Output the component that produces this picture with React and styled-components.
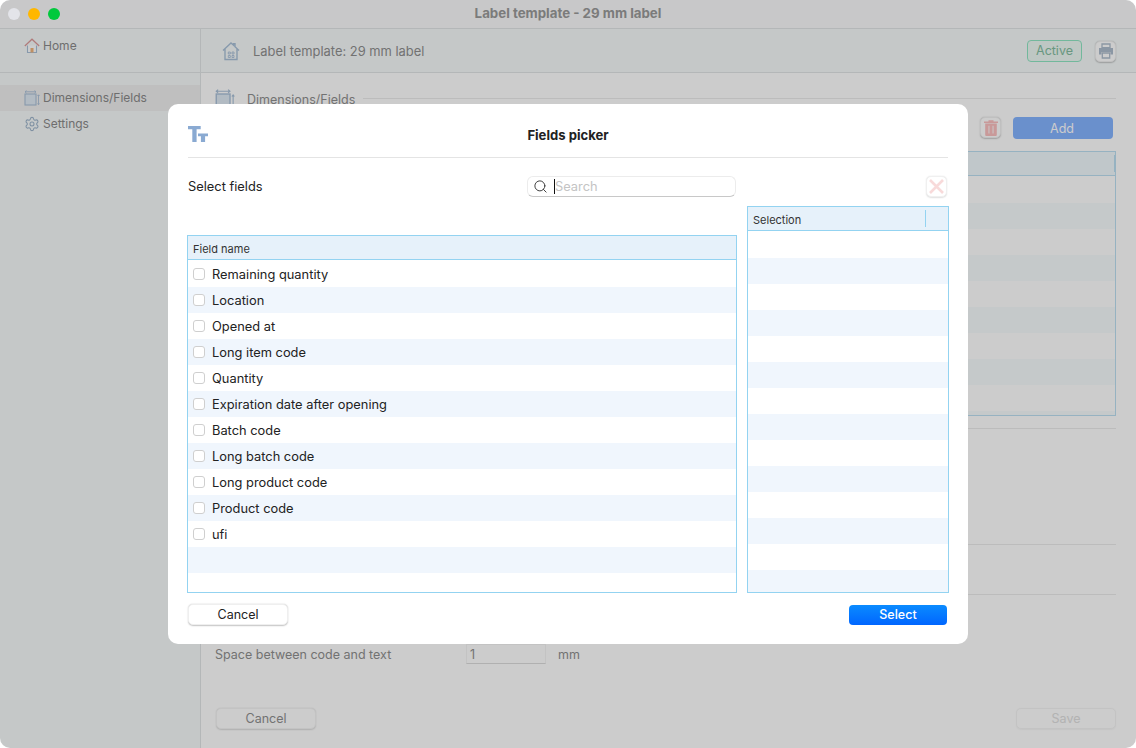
import React from "react";
import styled, { createGlobalStyle } from "styled-components";
import { Search, Settings } from "lucide-react";

const GlobalStyle = createGlobalStyle`
  html, body { margin: 0; padding: 0; background: #fff; }
  body { font-family: Inter, "Liberation Sans", sans-serif; -webkit-font-smoothing: antialiased; }
  * { box-sizing: border-box; }
`;

const FIELDS = [
  "Remaining quantity",
  "Location",
  "Opened at",
  "Long item code",
  "Quantity",
  "Expiration date after opening",
  "Batch code",
  "Long batch code",
  "Long product code",
  "Product code",
  "ufi",
  "",
  "",
];

const Window = styled.div`
  position: relative;
  width: 1136px;
  height: 748px;
  border-radius: 10px;
  overflow: hidden;
  background: #fff;
  display: flex;
  flex-direction: column;
`;

const TitleBar = styled.div`
  height: 29px;
  flex: none;
  background: #fafbfc;
  border-bottom: 1px solid #e2e5e6;
  display: flex;
  align-items: center;
  justify-content: center;
  position: relative;
  font-size: 13.3px;
  font-weight: 700;
  color: #9a9a9a;
  padding-bottom: 2px;
`;

const Lights = styled.div`
  position: absolute;
  z-index: 2;
  left: 8px;
  top: 8px;
  display: flex;
  gap: 8px;
`;

const Light = styled.span`
  width: 12px;
  height: 12px;
  border-radius: 50%;
  background: ${(p) => p.$color};
`;

const Body = styled.div`
  flex: 1;
  display: flex;
  min-height: 0;
`;

const Sidebar = styled.aside`
  width: 201px;
  flex: none;
  background: #f7fbfb;
  border-right: 1px solid #e2e5e6;
  color: #8a8a8a;
  font-size: 12px;
`;

const SideTop = styled.div`
  height: 44px;
  border-bottom: 1px solid #e2e5e6;
  margin-bottom: 12px;
  padding-top: 4px;
`;

const NavRow = styled.div`
  height: 26px;
  padding-left: 24px;
  display: flex;
  align-items: center;
  gap: 3px;
  padding-bottom: 1px;
  background: ${(p) => (p.$active ? "#efefef" : "transparent")};
  svg { flex: none; }
`;

const Main = styled.main`
  flex: 1;
  min-width: 0;
  display: flex;
  flex-direction: column;
  background: #fff;
  color: #8f8f8f;
  font-size: 12.5px;
`;

const MainHeader = styled.header`
  height: 44px;
  flex: none;
  background: #f7fbfb;
  border-bottom: 1px solid #e2e5e6;
  display: flex;
  align-items: center;
  padding: 1px 20px 0 21px;
  gap: 13px;
`;

const HeaderTitle = styled.span`
  flex: 1;
  font-size: 12.9px;
`;

const ActiveBadge = styled.span`
  width: 55px;
  height: 22px;
  display: flex;
  align-items: center;
  justify-content: center;
  padding-bottom: 1px;
  border: 1px solid #8fe6c4;
  border-radius: 4px;
  background: #eef9f4;
  color: #82bda0;
`;

const IconButton = styled.button`
  width: 21px;
  height: 21px;
  padding: 0;
  display: flex;
  align-items: center;
  justify-content: center;
  background: ${(p) => p.$bg || "#fff"};
  border: 1px solid #f0f0f0;
  border-radius: 5px;
  box-shadow: 0 0.5px 1.5px rgba(0, 0, 0, ${(p) => p.$shadow || 0.22});
`;

const Content = styled.div`
  flex: 1;
  padding: 0 20px 0 14px;
  display: flex;
  flex-direction: column;
`;

const SectionHead = styled.div`
  height: 38px;
  flex: none;
  display: flex;
  align-items: center;
  gap: 12px;
  padding-top: 14px;
`;

const SectionLine = styled.span`
  flex: 1;
  height: 1px;
  background: #ececec;
  margin: -2px 0 0 -4px;
`;

const Toolbar = styled.div`
  height: 40px;
  flex: none;
  padding: 6px 3px 0 0;
  display: flex;
  justify-content: flex-end;
  gap: 12px;
`;

const AddButton = styled.button`
  width: 100px;
  height: 22px;
  border: 0;
  border-radius: 4px;
  background: #85b4ff;
  color: #fff;
  font: inherit;
  padding: 0 2px 0 0;
`;

const BackTable = styled.div`
  height: 265px;
  flex: none;
  border: 1px solid #bcdff2;
  overflow: hidden;
`;

const BackHeader = styled.div`
  height: 24px;
  background: #f0f9fd;
  border-bottom: 1px solid #bcdff2;
  display: flex;
  align-items: center;
  justify-content: flex-end;
`;

const BackSplit = styled.span`
  width: 1px;
  height: 17px;
  background: #bcdff2;
`;

const BackRow = styled.div`
  height: 26px;
  background: ${(p) => (p.$alt ? "#f7fcfd" : "#fff")};
`;

const Divider = styled.div`
  height: 1px;
  flex: none;
  background: #ececec;
  margin-top: ${(p) => p.$top}px;
`;

const SpaceRow = styled.div`
  display: flex;
  align-items: center;
  height: 20px;
  margin-top: 49px;
  flex: none;
`;

const SpaceLabel = styled.span`
  width: 251px;
`;

const SpaceInput = styled.span`
  width: 80px;
  height: 20px;
  border: 1px solid #f4f4f4;
  border-bottom-color: #dcdcdc;
  padding: 0 0 0 3px;
  display: flex;
  align-items: center;
`;

const Unit = styled.span`
  margin-left: 12px;
`;

const BackFooter = styled.div`
  display: flex;
  justify-content: space-between;
  margin-top: 44px;
  padding-left: 1px;
`;

const BackButton = styled.button`
  width: 100px;
  height: 21px;
  padding: 0;
  border: 1px solid #f4f4f4;
  border-radius: 5px;
  background: #fff;
  font: inherit;
  color: ${(p) => (p.$disabled ? "#e0e0e0" : "#8f8f8f")};
  box-shadow: 0 0.5px 1.5px rgba(0, 0, 0, ${(p) => (p.$disabled ? 0.04 : 0.14)});
`;

const Scrim = styled.div`
  position: absolute;
  inset: 0;
  background: rgba(0, 0, 0, 0.2);
`;

const Modal = styled.section`
  position: absolute;
  left: 168px;
  top: 104px;
  width: 800px;
  height: 540px;
  background: #fff;
  border-radius: 10px;
  padding: 0 19px;
  color: #222;
  font-size: 12.85px;
  display: flex;
  flex-direction: column;
`;

const ModalHeader = styled.header`
  height: 54px;
  flex: none;
  margin: 0 1px;
  border-bottom: 1px solid #e4e4e4;
  display: flex;
  align-items: center;
  justify-content: center;
  position: relative;
  font-weight: 700;
  font-size: 13.1px;
  padding-top: 8px;
  svg { position: absolute; left: 0; top: 22px; }
`;

const PickerGrid = styled.div`
  display: grid;
  grid-template-columns: 550px 202px;
  grid-template-rows: 435px;
  column-gap: 10px;
  height: 435px;
  flex: none;
`;

const LeftColumn = styled.div`
  display: flex;
  flex-direction: column;
  min-width: 0;
  min-height: 0;
`;

const RightColumn = styled.div`
  display: flex;
  flex-direction: column;
  padding-top: 18px;
  min-width: 0;
  min-height: 0;
`;

const SearchBar = styled.div`
  height: 77px;
  flex: none;
  padding: 18px 1px 0 1px;
  display: flex;
  justify-content: space-between;
  align-items: flex-start;
`;

const FieldLabel = styled.label`
  line-height: 21px;
`;

const SearchBox = styled.div`
  width: 209px;
  height: 21px;
  border: 1px solid #ececec;
  border-bottom-color: #c8c8c8;
  border-radius: 6px;
  display: flex;
  align-items: center;
  padding-left: 5px;
`;

const Caret = styled.span`
  width: 1px;
  height: 15px;
  background: #111;
  margin-left: 6px;
  flex: none;
`;

const SearchInput = styled.input`
  flex: 1;
  min-width: 0;
  border: 0;
  outline: 0;
  padding: 0;
  background: transparent;
  font: inherit;
  &::placeholder { color: #c4c4c4; opacity: 1; }
`;

const ClearWrap = styled.div`
  height: 30px;
  flex: none;
  display: flex;
  justify-content: flex-end;
  padding-right: 2px;
`;

const Table = styled.div`
  flex: 1;
  min-height: 0;
  border: 1px solid #93d3f1;
  overflow: hidden;
`;

const TableHeader = styled.div`
  height: 24px;
  background: #e6f1fa;
  border-bottom: 1px solid #93d3f1;
  display: flex;
  align-items: center;
  justify-content: space-between;
  padding: 2px 0 0 5px;
  font-size: 11px;
  color: #333;
`;

const HeaderSplit = styled.span`
  width: 1px;
  height: 17px;
  margin: -2px 22px 0 0;
  background: #93d3f1;
`;

const Row = styled.div`
  height: 26px;
  display: flex;
  align-items: center;
  gap: 7px;
  padding-left: 5px;
  background: ${(p) => (p.$alt ? "#f0f6fd" : "#fff")};
`;

const Check = styled.span`
  width: 12px;
  height: 12px;
  flex: none;
  background: #fff;
  border: 1px solid #cfcfcf;
  border-radius: 3px;
`;

const RowsPad = styled.div`
  height: 1px;
`;

const ModalFooter = styled.footer`
  display: flex;
  justify-content: space-between;
  align-items: center;
  padding: 0 2px 0 1px;
  margin-top: 11px;
  font-size: 12.5px;
`;

const CancelButton = styled.button`
  width: 100px;
  height: 21px;
  padding: 0;
  border: 1px solid #efefef;
  border-radius: 5px;
  background: #fff;
  font: inherit;
  color: #222;
  box-shadow: 0 0.5px 1.5px rgba(0, 0, 0, 0.24);
`;

const SelectButton = styled.button`
  width: 98px;
  height: 20px;
  padding: 0;
  border: 0;
  border-radius: 4px;
  background: linear-gradient(#0a8bff, #0066ff);
  color: #fff;
  font: inherit;
  font-weight: 500;
`;

function HomeIcon() {
  return (
    <svg width="16" height="16" viewBox="0 0 16 16" fill="none">
      <path d="M3.5 7.5v7h9v-7" fill="#fff" stroke="#a9c0d8" strokeWidth="1.1" />
      <path d="M.8 8 8 1.2 15.2 8" stroke="#dc9a9a" strokeWidth="1.2" />
      <rect x="6.5" y="10" width="3" height="4.5" fill="#f0b47c" />
    </svg>
  );
}

function DimensionsIcon({ size = 16 }) {
  return (
    <svg width={size} height={size} viewBox="0 0 16 16" fill="none" stroke="#a9c0d8">
      <rect x="1" y="4" width="11" height="11" fill="#dfeaf4" strokeWidth="1.1" />
      <path d="M1 1.8h11M2.5.5 1 1.8l1.5 1.3M10.5.5 12 1.8l-1.5 1.3M14.5 5v9.5M13.5 6l1-1.2 1 1.2M13.5 13.5l1 1.2 1-1.2" strokeWidth="0.9" />
    </svg>
  );
}

function TemplateIcon() {
  return (
    <svg width="18" height="20" viewBox="0 0 18 20" fill="none" stroke="#a9c0d8" strokeWidth="1.4">
      <path d="M1 9.5 9 2l2.5 2.2V2.8H13v3l4 3.7M3 8v10.5h12V8" />
      <path d="M6.3 11h2v2h-2zM10 11h2v2h-2zM6.3 14.5h2v2h-2zM10 14.5h2v2h-2z" strokeWidth="0.9" />
    </svg>
  );
}

function PrinterIcon() {
  return (
    <svg width="16" height="16" viewBox="0 0 16 16">
      <path d="M4 1h8v3.6H4z" fill="none" stroke="#aebdcd" strokeWidth="1.3" />
      <path d="M1 5h14v6.5h-2.5V9h-9v2.5H1z" fill="#aebdcd" />
      <path d="M4.3 10h7.4v5H4.3z" fill="none" stroke="#aebdcd" strokeWidth="1.3" />
    </svg>
  );
}

function TrashIcon() {
  return (
    <svg width="14" height="16" viewBox="0 0 14 16">
      <path d="M0 1.6h14v1.4H0zM4.5.3h5v1.4h-5z" fill="#fcc0c0" />
      <path d="M1.2 3.5h11.6V15a1 1 0 0 1-1 1H2.2a1 1 0 0 1-1-1z" fill="#fcc0c0" />
      <path d="M4.2 5.8h1.5v7.6H4.2zM8.3 5.8h1.5v7.6H8.3z" fill="#fde6e6" />
    </svg>
  );
}

function ClearIcon() {
  return (
    <svg width="15" height="15" viewBox="0 0 15 15" stroke="#f8dada" strokeWidth="2.6">
      <path d="M1 1l13 13M14 1 1 14" />
    </svg>
  );
}

function TextSizeIcon() {
  return (
    <svg width="20" height="16" viewBox="0 0 20 16" fill="#8aaad2">
      <path d="M0 0h12.7v3.3H8.6V16H4.3V3.3H0z" />
      <path d="M10 7.6h10v2.6h-2.9V16h-4.2v-5.8H10z" />
    </svg>
  );
}

export default function App() {
  return (
    <>
      <GlobalStyle />
      <Window>
        <TitleBar>
          <Lights>
            <Light $color="#e3e4e9" />
            <Light $color="#ffb700" />
            <Light $color="#00c93c" />
          </Lights>
          Label template - 29 mm label
        </TitleBar>
        <Body>
          <Sidebar>
            <SideTop>
              <NavRow>
                <HomeIcon />
                Home
              </NavRow>
            </SideTop>
            <NavRow $active>
              <DimensionsIcon />
              Dimensions/Fields
            </NavRow>
            <NavRow>
              <Settings size={16} color="#9fb5cb" strokeWidth={1.6} />
              Settings
            </NavRow>
          </Sidebar>
          <Main>
            <MainHeader>
              <TemplateIcon />
              <HeaderTitle>Label template: 29 mm label</HeaderTitle>
              <ActiveBadge>Active</ActiveBadge>
              <IconButton>
                <PrinterIcon />
              </IconButton>
            </MainHeader>
            <Content>
              <SectionHead>
                <DimensionsIcon size={20} />
                Dimensions/Fields
                <SectionLine />
              </SectionHead>
              <Toolbar>
                <IconButton>
                  <TrashIcon />
                </IconButton>
                <AddButton>Add</AddButton>
              </Toolbar>
              <BackTable>
                <BackHeader>
                  <BackSplit />
                </BackHeader>
                <RowsPad />
                {Array.from({ length: 10 }, (_, i) => (
                  <BackRow key={i} $alt={i % 2 === 1} />
                ))}
              </BackTable>
              <Divider $top={12} />
              <Divider $top={115} />
              <Divider $top={49} />
              <SpaceRow>
                <SpaceLabel>Space between code and text</SpaceLabel>
                <SpaceInput>1</SpaceInput>
                <Unit>mm</Unit>
              </SpaceRow>
              <BackFooter>
                <BackButton>Cancel</BackButton>
                <BackButton $disabled>Save</BackButton>
              </BackFooter>
            </Content>
          </Main>
        </Body>
        <Scrim />
        <Modal>
          <ModalHeader>
            <TextSizeIcon />
            Fields picker
          </ModalHeader>
          <PickerGrid>
            <LeftColumn>
              <SearchBar>
                <FieldLabel>Select fields</FieldLabel>
                <SearchBox>
                  <Search size={15} color="#333" strokeWidth={1.5} />
                  <Caret />
                  <SearchInput placeholder="Search" readOnly />
                </SearchBox>
              </SearchBar>
              <Table>
                <TableHeader>Field name</TableHeader>
                <RowsPad />
                {FIELDS.map((name, i) => (
                  <Row key={i} $alt={i % 2 === 1}>
                    {name && <Check />}
                    {name}
                  </Row>
                ))}
              </Table>
            </LeftColumn>
            <RightColumn>
              <ClearWrap>
                <IconButton $shadow={0.12}>
                  <ClearIcon />
                </IconButton>
              </ClearWrap>
              <Table>
                <TableHeader>
                  Selection
                  <HeaderSplit />
                </TableHeader>
                <RowsPad />
                {Array.from({ length: 14 }, (_, i) => (
                  <Row key={i} $alt={i % 2 === 1} />
                ))}
              </Table>
            </RightColumn>
          </PickerGrid>
          <ModalFooter>
            <CancelButton>Cancel</CancelButton>
            <SelectButton>Select</SelectButton>
          </ModalFooter>
        </Modal>
      </Window>
    </>
  );
}
